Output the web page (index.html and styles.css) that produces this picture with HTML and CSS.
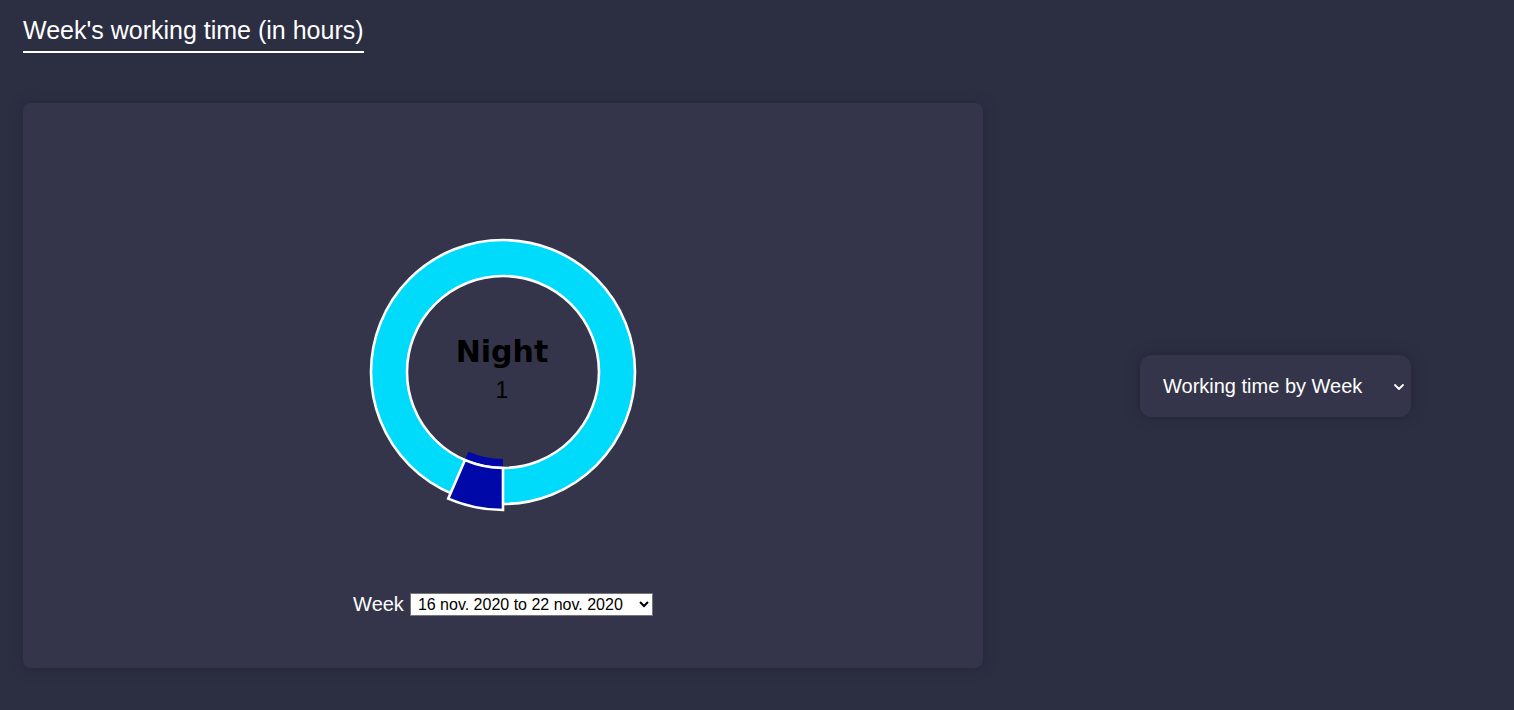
FILE: index.html
```html
<!DOCTYPE html>
<html lang="en">
<head>
<meta charset="utf-8">
<title>Week's working time</title>
<link rel="stylesheet" href="styles.css">
</head>
<body>
<h1 class="page-title">Week's working time (in hours)</h1>
<div class="layout">
  <section class="card">
    <svg class="donut" width="290" height="290" viewBox="0 0 290 290">
      <circle cx="145" cy="145" r="114" fill="none" stroke="#00dafb" stroke-width="36"/>
      <circle cx="145" cy="145" r="132" fill="none" stroke="#ffffff" stroke-width="2.6"/>
      <path d="M145,283 A138,138 0 0 1 90.2,271.66 L110.45,224.85 A87,87 0 0 0 145,232 Z" fill="#0009a8"/>
      <circle cx="145" cy="145" r="96" fill="none" stroke="#ffffff" stroke-width="2.6"/>
      <path d="M145,283 A138,138 0 0 1 90.2,271.66 L106.88,233.11 A96,96 0 0 0 145,241 Z" fill="#0009a8" stroke="#ffffff" stroke-width="2.6" stroke-linejoin="miter"/>
      <text class="donut-label" x="144" y="134.5" text-anchor="middle">Night</text>
      <text class="donut-value" x="144" y="170.5" text-anchor="middle">1</text>
    </svg>
    <div class="week-row">
      <label class="week-label" for="week">Week</label>
      <select class="week-select" id="week">
        <option>16 nov. 2020 to 22 nov. 2020</option>
      </select>
    </div>
  </section>
  <aside class="side">
    <div class="view-picker">
      <select class="view-select">
        <option>Working time by Week</option>
      </select>
      <svg class="view-chevron" width="12" height="8" viewBox="0 0 12 8"><path d="M2 2 L6 6 L10 2" fill="none" stroke="#ffffff" stroke-width="1.8" stroke-linecap="round" stroke-linejoin="round"/></svg>
    </div>
  </aside>
</div>
</body>
</html>
```
FILE: styles.css
```css
html, body {
  margin: 0;
  padding: 0;
}
body {
  background: #2c2e42;
  font-family: "Liberation Sans", Arial, sans-serif;
  color: #ffffff;
  width: 1514px;
  height: 710px;
  overflow: hidden;
}
.page-title {
  display: inline-block;
  margin: 16px 0 0 23px;
  padding: 0 0 6px 0;
  font-size: 25px;
  font-weight: normal;
  line-height: 29px;
  border-bottom: 2px solid #ffffff;
}
.layout {
  display: flex;
  margin: 50px 0 0 23px;
}
.card {
  width: 960px;
  height: 565px;
  box-sizing: border-box;
  background: #34354a;
  border-radius: 8px;
  box-shadow: 0 0 16px rgba(0, 0, 0, 0.18);
  display: flex;
  flex-direction: column;
  align-items: center;
  padding-top: 124px;
}
.donut {
  display: block;
}
.donut-label {
  font-family: "DejaVu Sans", sans-serif;
  font-weight: bold;
  font-size: 30px;
  fill: #000000;
}
.donut-value {
  font-family: "Liberation Sans", Arial, sans-serif;
  font-size: 23px;
  fill: #000000;
}
.week-row {
  display: flex;
  align-items: center;
  gap: 6px;
  margin-top: 76px;
}
.week-label {
  font-size: 20px;
  line-height: 23px;
  color: #ffffff;
}
.week-select {
  width: 243px;
  height: 23px;
  font-family: "Liberation Sans", Arial, sans-serif;
  font-size: 16px;
  color: #000000;
  background: #ffffff;
  border: 1px solid #767676;
  border-radius: 0;
  padding: 0 0 0 3px;
  margin: 0;
}
.side {
  flex: 1;
  display: flex;
  align-items: center;
  justify-content: center;
  padding-left: 54px;
}
.view-picker {
  position: relative;
  width: 271px;
  height: 62px;
}
.view-select {
  appearance: none;
  -webkit-appearance: none;
  width: 100%;
  height: 100%;
  box-sizing: border-box;
  margin: 0;
  padding: 0 0 0 23px;
  border: none;
  border-radius: 12px;
  background: #34354a;
  box-shadow: 0 0 16px rgba(0, 0, 0, 0.22);
  color: #ffffff;
  font-family: "Liberation Sans", Arial, sans-serif;
  font-size: 20px;
  outline: none;
}
.view-chevron {
  position: absolute;
  right: 6px;
  top: 28px;
  pointer-events: none;
}
```
